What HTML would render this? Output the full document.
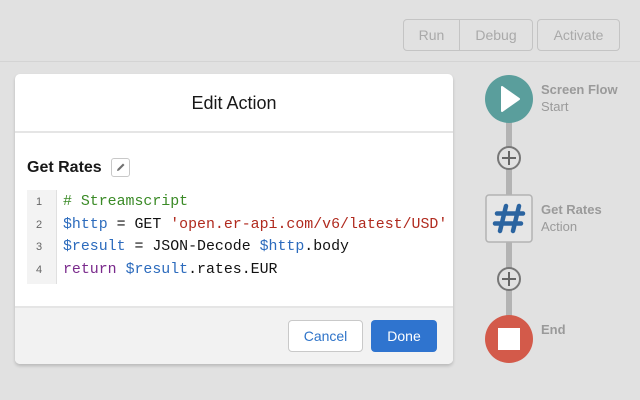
<!DOCTYPE html>
<html><head><meta charset="utf-8"><style>
*{box-sizing:border-box;margin:0;padding:0}
body{width:640px;height:400px;background:#e1e1e1;font-family:"Liberation Sans",Arial,sans-serif;position:relative;overflow:hidden}
.abs{position:absolute}
.topline{left:0;top:61px;width:640px;height:1px;background:#d4d4d4}
.tb{top:19px;height:32px;border:1px solid #c4c4c4;border-radius:4px;color:#a9a9a9;font-size:14px;display:flex;align-items:center;justify-content:center}
.modal{left:15px;top:74px;width:438px;height:290px;background:#fff;border-radius:5px;box-shadow:0 2px 3px rgba(0,0,0,.18);overflow:hidden}
.code{font-family:"Liberation Mono",monospace;font-size:14.9px;line-height:22.5px;white-space:pre}
.ln{font-family:"Liberation Sans",sans-serif;font-size:11px;color:#666;text-align:center;width:24px;line-height:22.5px}
.lbl{font-size:13px;color:#9a9a9a;line-height:17px}
</style></head><body>
<div class="abs topline"></div>
<div class="abs tb" style="left:403px;width:57px;border-radius:4px 0 0 4px">Run</div>
<div class="abs tb" style="left:459px;width:74px;border-radius:0 4px 4px 0">Debug</div>
<div class="abs tb" style="left:537px;width:83px">Activate</div>

<div class="abs modal">
  <div class="abs" style="left:0;top:0;width:438px;height:57px;text-align:center;line-height:58px;font-size:18px;color:#181818">Edit Action</div>
  <div class="abs" style="left:0;top:57px;width:438px;height:2px;background:#e5e5e5"></div>
  <div class="abs" style="left:12px;top:85px;font-size:16px;font-weight:bold;color:#181818">Get Rates</div>
  <div class="abs" style="left:96px;top:84px;width:19px;height:19px;border:1px solid #c8c8c8;border-radius:3px">
    <svg width="17" height="17" viewBox="0 0 17 17"><path d="M5 12 L5.5 10 L11 4.5 L12.5 6 L7 11.5 Z" fill="#707070"/></svg>
  </div>
  <div class="abs" style="left:12px;top:116px;width:30px;height:94px;background:#f3f3f3;border-right:1px solid #e0e0e0;padding-top:1px">
    <div class="ln">1</div><div class="ln">2</div><div class="ln">3</div><div class="ln">4</div>
  </div>
  <div class="abs code" style="left:48px;top:117px;color:#111"><span style="color:#3a8a26"># Streamscript</span>
<span style="color:#2c6bbd">$http</span> = GET <span style="color:#b02a1e">'open.er-api.com/v6/latest/USD'</span>
<span style="color:#2c6bbd">$result</span> = JSON-Decode <span style="color:#2c6bbd">$http</span>.body
<span style="color:#7a2a8c">return</span> <span style="color:#2c6bbd">$result</span>.rates.EUR</div>
  <div class="abs" style="left:0;top:232px;width:438px;height:58px;background:#f2f2f2;border-top:2px solid #e5e5e5"></div>
  <div class="abs" style="left:273px;top:246px;width:75px;height:32px;background:#fff;border:1px solid #c9c9c9;border-radius:4px;color:#2f74c9;font-size:14px;display:flex;align-items:center;justify-content:center">Cancel</div>
  <div class="abs" style="left:356px;top:246px;width:66px;height:32px;background:#2f74cf;border-radius:4px;color:#fff;font-size:14px;display:flex;align-items:center;justify-content:center">Done</div>
</div>

<svg class="abs" style="left:470px;top:60px" width="170" height="320" viewBox="470 60 170 320">
  <rect x="506" y="120" width="6" height="210" fill="#b3b3b3"/>
  <circle cx="509" cy="99" r="24" fill="#5a9e9c"/>
  <path d="M502 87 L502 111 L519 99 Z" fill="#fff" stroke="#fff" stroke-linejoin="round" stroke-width="2"/>
  <circle cx="509" cy="158" r="11" fill="#e1e1e1" stroke="#777" stroke-width="2"/>
  <path d="M502 158 H516 M509 151 V165" stroke="#666" stroke-width="2"/>
  <rect x="486" y="195" width="46" height="47" rx="3" fill="#e6e6e6" stroke="#b3b3b3" stroke-width="1.5"/>
  <path d="M506 206 L500 231 M519 206 L513 231 M497 213.5 H523 M495 223.5 H521" stroke="#2b64a0" stroke-width="4.5" stroke-linecap="round" fill="none"/>
  <circle cx="509" cy="279" r="11" fill="#e1e1e1" stroke="#777" stroke-width="2"/>
  <path d="M502 279 H516 M509 272 V286" stroke="#666" stroke-width="2"/>
  <circle cx="509" cy="339" r="24" fill="#d35a4a"/>
  <rect x="498" y="328" width="22" height="22" fill="#fff"/>
</svg>
<div class="abs lbl" style="left:541px;top:81px"><b>Screen Flow</b><br>Start</div>
<div class="abs lbl" style="left:541px;top:201px"><b>Get Rates</b><br>Action</div>
<div class="abs lbl" style="left:541px;top:321px"><b>End</b></div>
</body></html>
